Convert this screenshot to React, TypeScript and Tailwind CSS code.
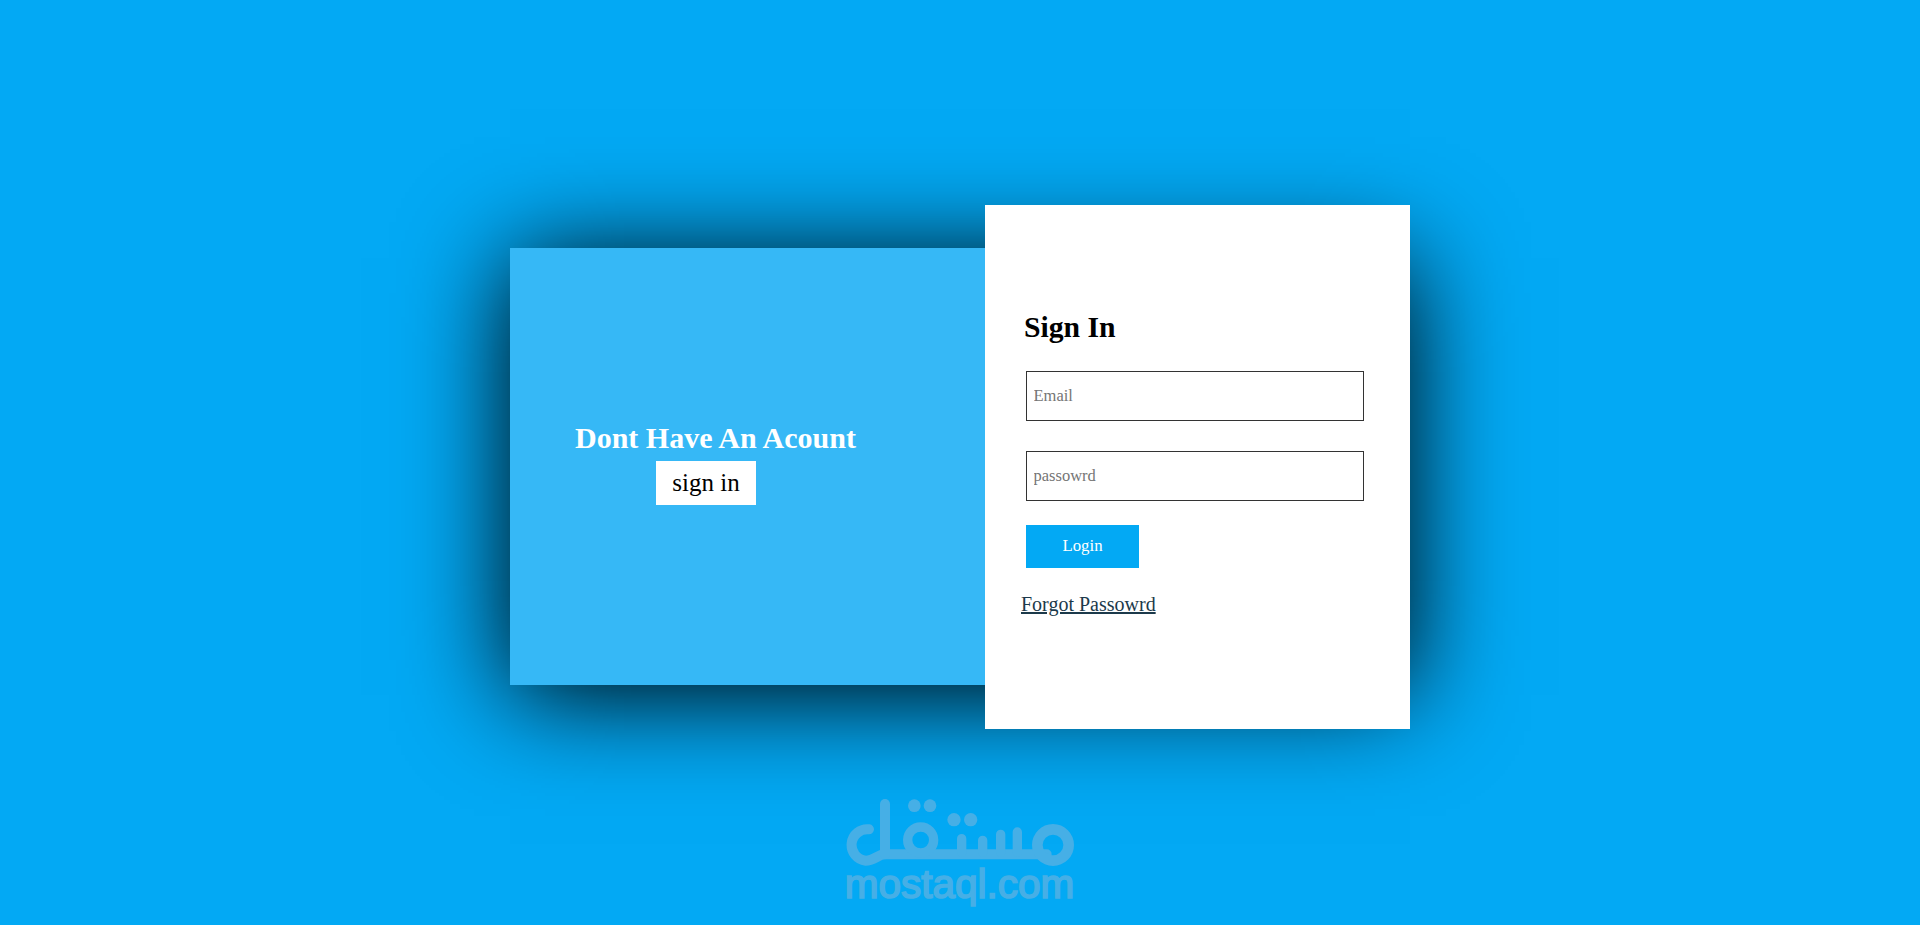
export default function App() {
  const serif = "font-['Liberation_Serif','Times_New_Roman',serif]";
  return (
    <div className={`relative flex h-[925px] items-center justify-center overflow-hidden bg-[#03a9f4] pt-[8px] ${serif}`}>
      <div className="flex h-[437px] w-[900px] items-center bg-[#36b8f6] shadow-[0_10px_100px_#000]">
        <div className="flex h-full w-[475px] flex-col items-start pl-[65px] pt-[172px]">
          <h2 className="text-[30px] font-bold leading-[36px] text-white">Dont Have An Acount</h2>
          <button className="ml-[81px] mt-[5px] h-[44px] w-[100px] bg-white text-[25px] text-black">sign in</button>
        </div>
        <div className="flex h-[524px] w-[425px] flex-col items-start bg-white pl-[36px] pt-[104px]">
          <h2 className="ml-[3px] text-[29.7px] font-bold leading-[36px] text-black">Sign In</h2>
          <input
            placeholder="Email"
            className="ml-[5px] mt-[26px] h-[50px] w-[338px] border border-[#333] px-[6.5px] text-[16.5px] placeholder:text-[#757575]"
          />
          <input
            placeholder="passowrd"
            className="ml-[5px] mt-[30px] h-[50px] w-[338px] border border-[#333] px-[6.5px] text-[16.5px] placeholder:text-[#757575]"
          />
          <button className="ml-[5px] mt-[24px] h-[43px] w-[113px] bg-[#03a9f4] text-[16.8px] text-white">Login</button>
          <a href="#" className="mt-[24px] text-[20px] leading-[24px] text-[#1c3a4b] underline">Forgot Passowrd</a>
        </div>
      </div>
      <div className="absolute left-[845px] top-[799px] flex w-[229px] flex-col items-center text-[#46afe6]">
        <svg width="229" height="69" viewBox="135 90 687 207" fill="none" stroke="currentColor" strokeLinecap="round">
          <path d="M207 181A47 47 0 0 0 197 275C222 275 235 256 255 256H740" strokeWidth="30" />
          <path d="M255 105V256" strokeWidth="30" />
          <circle cx="362" cy="213" r="39" strokeWidth="28" />
          <circle cx="759" cy="228" r="47" strokeWidth="32" />
          <path d="M485 209V250M548 214V250M602 196V250M652 189V250" strokeWidth="28" />
          <g fill="currentColor" stroke="none">
            <circle cx="343" cy="110" r="19" />
            <circle cx="390" cy="110" r="19" />
            <circle cx="462" cy="152" r="20" />
            <circle cx="512" cy="152" r="20" />
          </g>
        </svg>
        <div className="mt-[-5px] whitespace-nowrap font-['Liberation_Sans',Arial,sans-serif] text-[40.5px] leading-[42px] [-webkit-text-stroke:1.7px_#46afe6]">mostaql.com</div>
      </div>
    </div>
  );
}
